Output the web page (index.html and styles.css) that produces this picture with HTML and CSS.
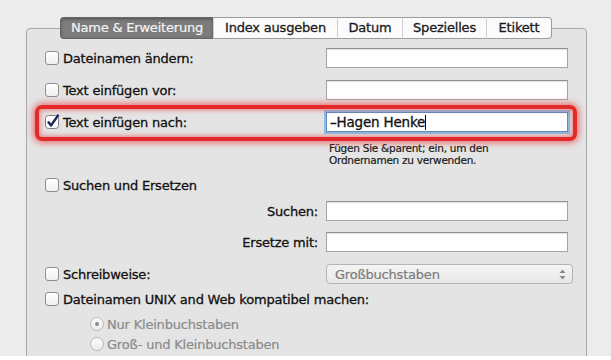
FILE: index.html
```html
<!DOCTYPE html>
<html>

<head>
  <title>Umbenennen</title>
  <meta charset="UTF-8">
  <link rel="stylesheet" href="styles.css">
</head>

<body>
  <div class="window">
    <div class="group">
      <div class="tabs">
        <div class="tab selected tabName">Name &amp; Erweiterung</div>
        <div class="tab tabIndex">Index ausgeben</div>
        <div class="tab tabDate">Datum</div>
        <div class="tab tabSpecial">Spezielles</div>
        <div class="tab tabLabel">Etikett</div>
      </div>

      <div class="form">
        <div class="row first">
          <label class="labelCol"><span class="check"></span>Dateinamen ändern:</label>
          <div class="field"></div>
        </div>

        <div class="row">
          <label class="labelCol"><span class="check"></span>Text einfügen vor:</label>
          <div class="field"></div>
        </div>

        <div class="row marked">
          <label class="labelCol">
            <svg class="checkSvg" width="15" height="15" viewBox="0 0 15 15">
              <rect x="0.5" y="1.5" width="13" height="13" rx="3" fill="#fff" stroke="#7c7c7c"/>
              <path d="M3 7.5 L6 11.5 L13.5 0.8" fill="none" stroke="#1b2a55" stroke-width="2.4" stroke-linejoin="round"/>
            </svg>Text einfügen nach:</label>
          <div class="field focused">–Hagen Henke<span class="caret"></span></div>
        </div>

        <div class="hint">Fügen Sie &amp;parent; ein, um den<br>Ordnernamen zu verwenden.</div>

        <div class="row sectionRow">
          <label class="labelCol"><span class="check"></span>Suchen und Ersetzen</label>
        </div>

        <div class="row searchRow">
          <label class="labelCol right">Suchen:</label>
          <div class="field"></div>
        </div>

        <div class="row replaceRow">
          <label class="labelCol right">Ersetze mit:</label>
          <div class="field"></div>
        </div>

        <div class="row caseRow">
          <label class="labelCol"><span class="check"></span>Schreibweise:</label>
          <div class="popup">
            <span>Großbuchstaben</span>
            <svg width="7" height="11" viewBox="0 0 7 11">
              <path d="M0.5 4 L3.5 0.5 L6.5 4 Z" fill="#8a8a8a"/>
              <path d="M0.5 7 L3.5 10.5 L6.5 7 Z" fill="#8a8a8a"/>
            </svg>
          </div>
        </div>

        <div class="row unixRow">
          <label class="labelCol wide"><span class="check"></span>Dateinamen UNIX and Web kompatibel machen:</label>
        </div>

        <div class="radioRow firstRadio">
          <span class="radio on"></span>Nur Kleinbuchstaben
        </div>
        <div class="radioRow">
          <span class="radio"></span>Groß- und Kleinbuchstaben
        </div>
      </div>
    </div>
  </div>
</body>

</html>
```

FILE: styles.css
```css
html {
  background-color: #ffffff;
}
body {
  margin: 0;
  font-family: "DejaVu Sans", "Open Sans", sans-serif;
  font-size: 13px;
  letter-spacing: -0.2px;
  color: #111111;
}
.window {
  height: 328px;
  padding: 28px 0 0 26px;
  background-color: #ececec;
  overflow: hidden;
}
.group {
  width: 559px;
  height: 340px;
  border: 1px solid #a8a8a8;
  border-radius: 4px;
  background-color: #e4e4e4;
}
.tabs {
  display: flex;
  margin: -12px 0 0 33px;
}
.tab {
  height: 20px;
  line-height: 20px;
  text-align: center;
  white-space: nowrap;
  background-color: #fbfbfb;
  border: 1px solid #9c9c9c;
  border-left: 1px solid #cfcfcf;
  border-right: none;
  color: #1a1a1a;
  -webkit-text-stroke: 0.3px #1a1a1a;
}
.tabName {
  width: 152px;
}
.tabIndex {
  width: 123px;
}
.tabDate {
  width: 64px;
}
.tabSpecial {
  width: 83px;
}
.tabLabel {
  width: 64px;
}
.tab:first-child {
  border-left: 1px solid #6f6f6f;
  border-radius: 4px 0 0 4px;
}
.tab:last-child {
  border-right: 1px solid #9c9c9c;
  border-radius: 0 4px 4px 0;
}
.tab.selected {
  background-color: #7c7c7c;
  border-color: #666666;
  color: #f4f4f4;
  -webkit-text-stroke: 0.2px #f4f4f4;
  box-shadow: inset 0 1px 3px rgba(0, 0, 0, 0.35);
}
.form {
  padding-left: 18px;
}
.row {
  display: flex;
  align-items: center;
  height: 22px;
  margin-top: 10px;
}
.row.first {
  margin-top: 8px;
}
.labelCol {
  display: flex;
  align-items: center;
  width: 281px;
  flex-shrink: 0;
  -webkit-text-stroke: 0.3px #111111;
}
.labelCol.wide {
  width: auto;
}
.labelCol.right {
  justify-content: flex-end;
  padding-right: 8px;
  width: 273px;
}
.check {
  width: 12px;
  height: 12px;
  margin-right: 4px;
  border: 1px solid #8e8e8e;
  border-radius: 3px;
  background: linear-gradient(#ffffff, #f0f0f0);
}
.checkSvg {
  margin-right: 3px;
  margin-top: -2px;
}
.field {
  width: 237px;
  height: 18px;
  line-height: 18px;
  padding-left: 3px;
  border: 1px solid #a5a5a5;
  border-top-color: #8e8e8e;
  background-color: #ffffff;
  box-shadow: inset 0 1px 1px rgba(0, 0, 0, 0.12);
}
.field.focused {
  border: 1px solid #5c8fc3;
  box-shadow: 0 0 0 2px #8fbde6;
  font-size: 13.5px;
  letter-spacing: -0.2px;
  -webkit-text-stroke: 0.3px #111111;
}
.caret {
  display: inline-block;
  width: 1px;
  height: 15px;
  vertical-align: -3px;
  background-color: #000000;
}
.marked {
  position: relative;
}
.marked::before {
  content: "";
  position: absolute;
  left: -10px;
  top: -6px;
  width: 534px;
  height: 28px;
  border: 4px solid #e22a2a;
  border-radius: 7px;
  box-shadow: 0 0 6px 2px rgba(235, 40, 40, 0.6), inset 0 0 5px 1px rgba(235, 40, 40, 0.55);
}
.hint {
  margin: 9px 0 0 284px;
  font-size: 10.5px;
  line-height: 12px;
  letter-spacing: -0.25px;
  color: #1a1a1a;
  -webkit-text-stroke: 0.2px #1a1a1a;
}
.sectionRow {
  margin-top: 8px;
}
.searchRow {
  margin-top: 4px;
}
.replaceRow {
  margin-top: 9px;
}
.popup {
  display: flex;
  align-items: center;
  justify-content: space-between;
  width: 231px;
  height: 18px;
  padding: 0 6px 0 8px;
  border: 1px solid #b4b4b4;
  border-radius: 4px;
  background: linear-gradient(#f4f4f4, #e8e8e8);
  color: #7c7c7c;
  -webkit-text-stroke: 0.2px #7c7c7c;
}
.unixRow {
  margin-top: 3px;
}
.radioRow {
  display: flex;
  align-items: center;
  height: 20px;
  padding-left: 45px;
  color: #8a8a8a;
  -webkit-text-stroke: 0.2px #8a8a8a;
}
.radioRow.firstRadio {
  margin-top: 4px;
}
.radio {
  position: relative;
  width: 12px;
  height: 12px;
  margin-right: 3px;
  border: 1px solid #b9b9b9;
  border-radius: 50%;
  background: linear-gradient(#fafafa, #ececec);
}
.radio.on::after {
  content: "";
  position: absolute;
  left: 4px;
  top: 4px;
  width: 4px;
  height: 4px;
  border-radius: 50%;
  background-color: #8a8a8a;
}
```
